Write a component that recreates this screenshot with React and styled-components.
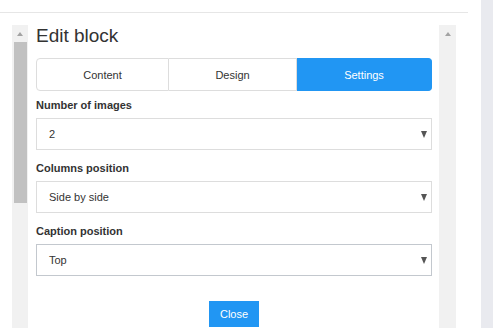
import React, { useState } from "react";
import styled, { createGlobalStyle } from "styled-components";

const GlobalStyle = createGlobalStyle`
  html, body {
    margin: 0;
    padding: 0;
    background: #fff;
    overflow: hidden;
  }
  body {
    font-family: "Liberation Sans", Arial, sans-serif;
    color: #333;
  }
`;

const Page = styled.div`
  display: flex;
  width: 493px;
  height: 328px;
  overflow: hidden;
`;

const Main = styled.div`
  width: 481px;
  display: flex;
  flex-direction: column;
`;

const SideStrip = styled.div`
  width: 12px;
  background: #e9eaef;
`;

const TopBar = styled.div`
  width: 468px;
  height: 12px;
  border-bottom: 1px solid #e6e6e6;
`;

const PanelRow = styled.div`
  display: flex;
  margin-top: 12px;
  padding-left: 12px;
  flex: 1;
`;

const Scrollbar = styled.div`
  width: 16px;
  background: #f1f1f1;
  display: flex;
  flex-direction: column;
  align-items: center;
`;

const ArrowUp = styled.div`
  margin: 7px 0 6px;
  width: 0;
  height: 0;
  border-left: 3.5px solid transparent;
  border-right: 3.5px solid transparent;
  border-bottom: 4px solid #a3a3a3;
`;

const Thumb = styled.div`
  width: 13px;
  height: 161px;
  background: #c1c1c1;
`;

const Content = styled.div`
  width: 396px;
  padding-left: 8px;
`;

const Title = styled.h2`
  margin: 0;
  font-size: 19px;
  line-height: 22px;
  font-weight: normal;
  color: #333;
`;

const Tabs = styled.div`
  display: grid;
  grid-template-columns: 133px 128px 135px;
  margin-top: 11px;
  height: 33px;
`;

const Tab = styled.button`
  font-family: inherit;
  font-size: 11px;
  padding: 0;
  border: 1px solid ${(p) => (p.$active ? "#2196f3" : "#ddd")};
  border-left-width: ${(p) => (p.$first ? "1px" : "0")};
  background: ${(p) => (p.$active ? "#2196f3" : "#fff")};
  color: ${(p) => (p.$active ? "#fff" : "#333")};
  border-radius: ${(p) =>
    p.$first ? "4px 0 0 4px" : p.$last ? "0 4px 4px 0" : "0"};
  cursor: pointer;
`;

const Field = styled.div`
  margin-top: ${(p) => (p.$first ? "7px" : "11px")};
`;

const Label = styled.div`
  font-size: 11px;
  line-height: 14px;
  font-weight: bold;
  color: #333;
  margin-bottom: 6px;
`;

const SelectBox = styled.div`
  height: 30px;
  border: 1px solid ${(p) => (p.$focused ? "#c3c8ce" : "#ddd")};
  display: flex;
  align-items: center;
  justify-content: space-between;
  padding: 0 4px 0 12px;
  font-size: 11px;
  color: #333;
  background: #fff;
`;

const Caret = styled.span`
  width: 0;
  height: 0;
  border-left: 3.5px solid transparent;
  border-right: 3.5px solid transparent;
  border-top: 7px solid #555;
`;

const Footer = styled.div`
  display: flex;
  justify-content: center;
  margin-top: 25px;
`;

const CloseButton = styled.button`
  width: 50px;
  height: 26px;
  border: 0;
  padding: 0;
  background: #2196f3;
  color: #fff;
  font-family: inherit;
  font-size: 11px;
  cursor: pointer;
`;

const RightScroll = styled(Scrollbar)`
  margin-left: 7px;
  width: 17px;
`;

const tabs = ["Content", "Design", "Settings"];

const fields = [
  { label: "Number of images", value: "2" },
  { label: "Columns position", value: "Side by side" },
  { label: "Caption position", value: "Top", focused: true },
];

export default function App() {
  const [active, setActive] = useState("Settings");

  return (
    <Page>
      <GlobalStyle />
      <Main>
        <TopBar />
        <PanelRow>
          <Scrollbar>
            <ArrowUp />
            <Thumb />
          </Scrollbar>
          <Content>
            <Title>Edit block</Title>
            <Tabs>
              {tabs.map((t, i) => (
                <Tab
                  key={t}
                  $first={i === 0}
                  $last={i === tabs.length - 1}
                  $active={t === active}
                  onClick={() => setActive(t)}
                >
                  {t}
                </Tab>
              ))}
            </Tabs>
            {fields.map((f, i) => (
              <Field key={f.label} $first={i === 0}>
                <Label>{f.label}</Label>
                <SelectBox $focused={f.focused}>
                  {f.value}
                  <Caret />
                </SelectBox>
              </Field>
            ))}
            <Footer>
              <CloseButton>Close</CloseButton>
            </Footer>
          </Content>
          <RightScroll>
            <ArrowUp />
          </RightScroll>
        </PanelRow>
      </Main>
      <SideStrip />
    </Page>
  );
}
